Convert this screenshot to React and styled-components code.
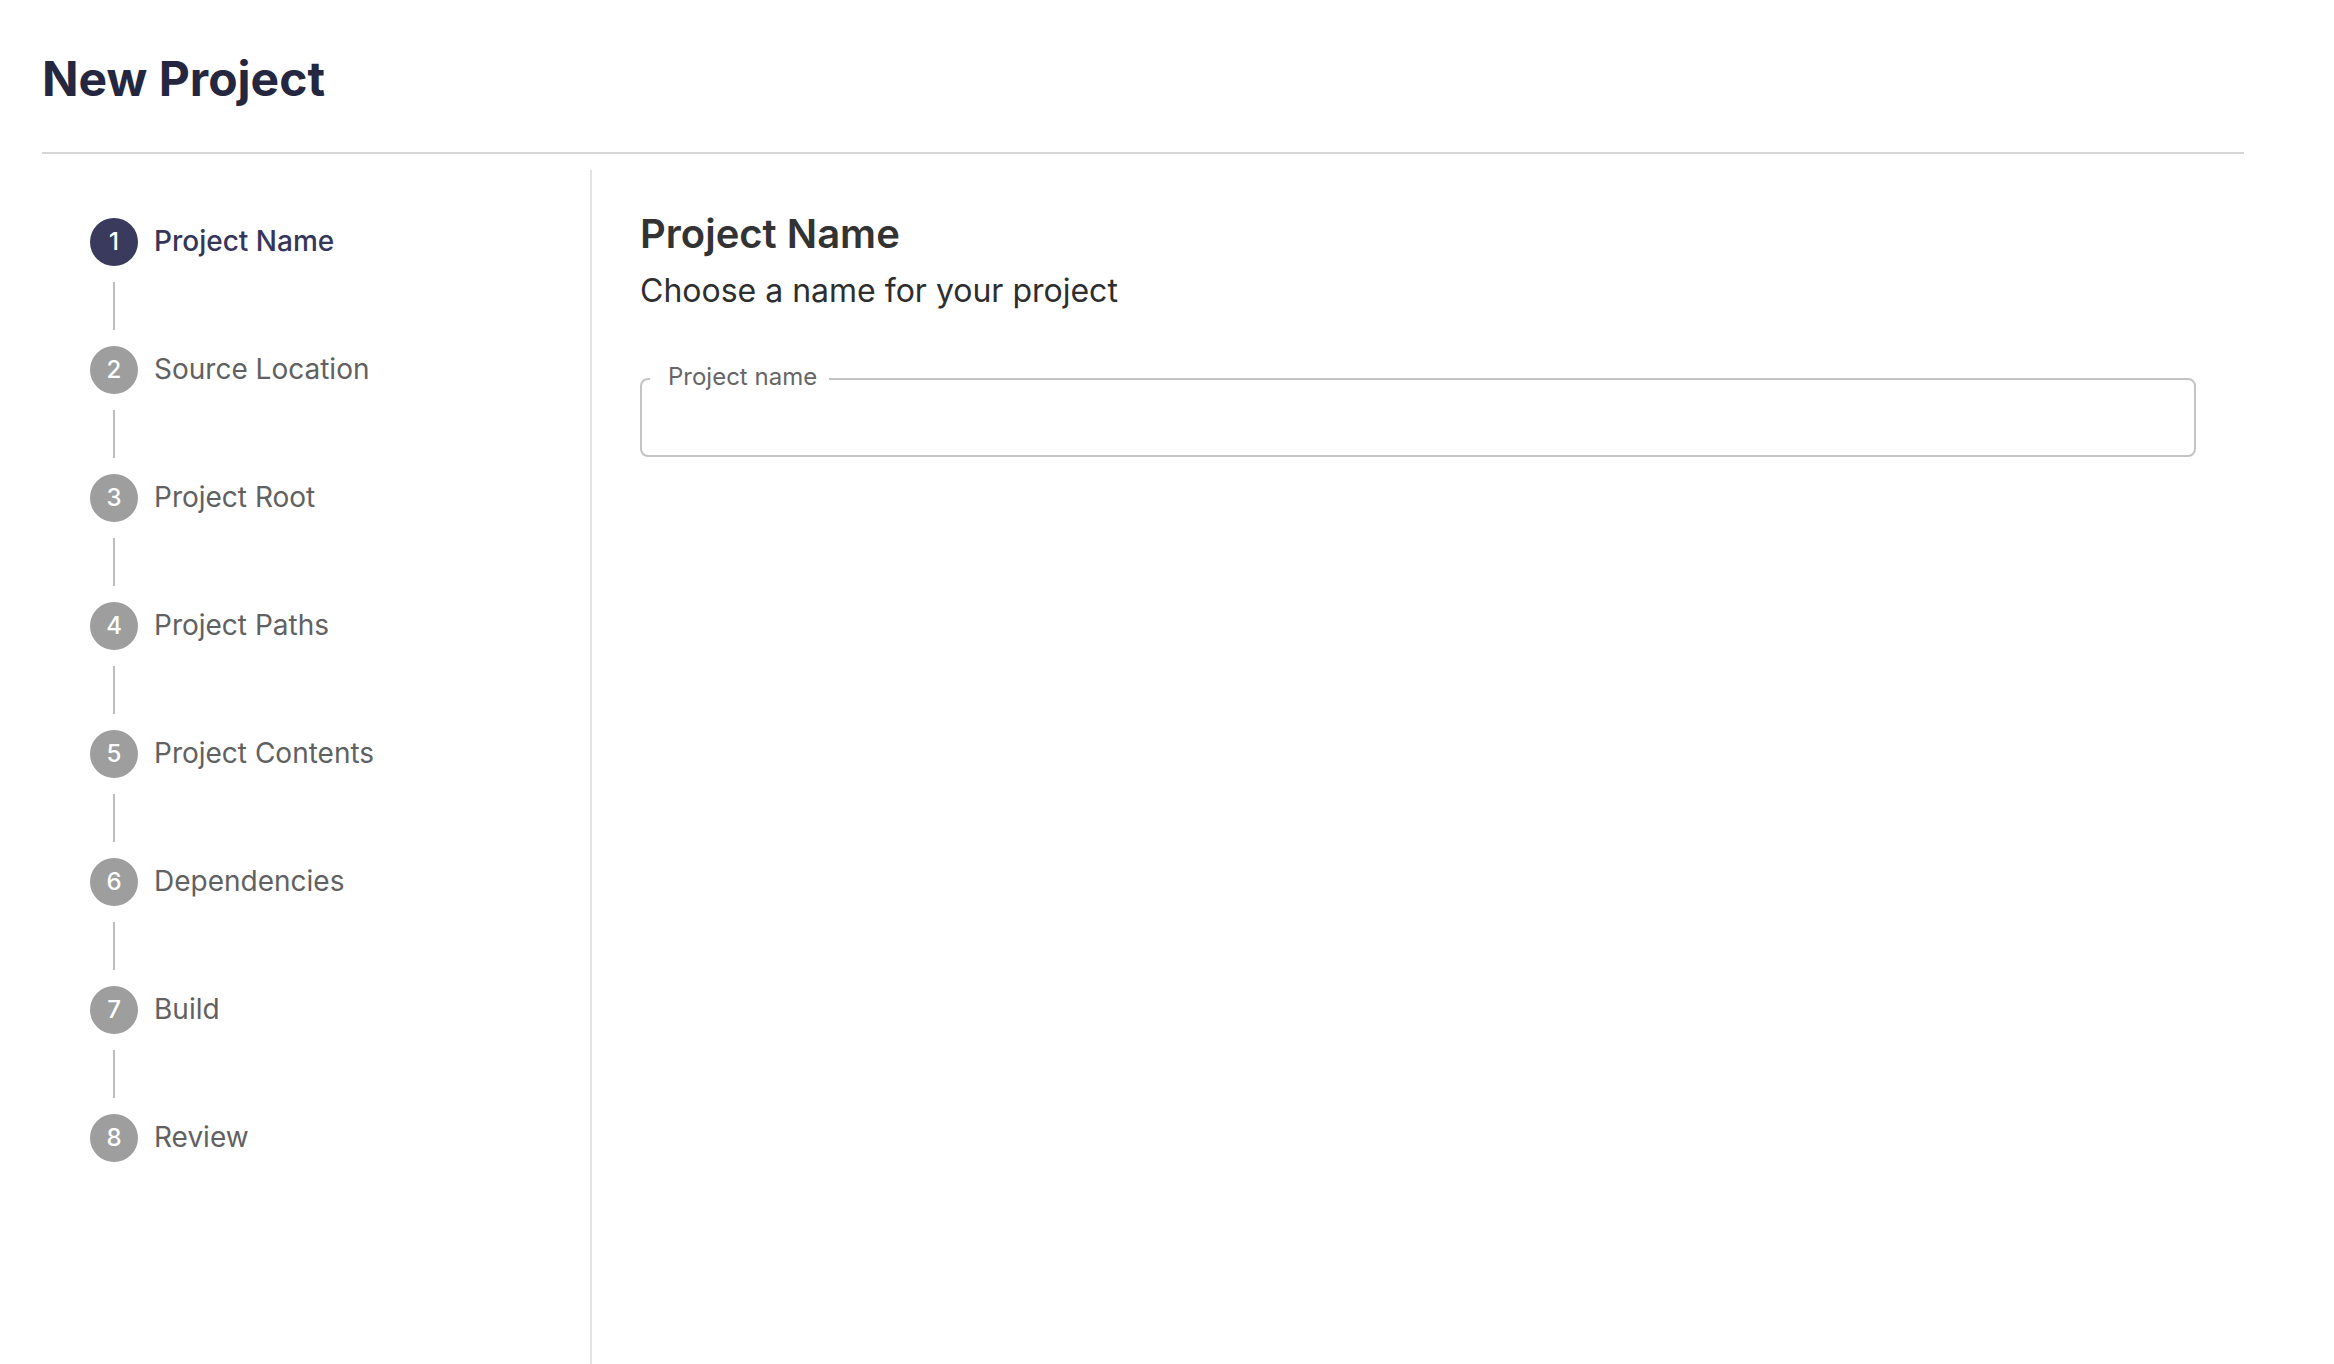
import React from 'react';
import styled, { createGlobalStyle } from 'styled-components';

const GlobalStyle = createGlobalStyle`
  * {
    box-sizing: border-box;
  }
  body {
    margin: 0;
    background: #ffffff;
    font-family: Inter, "Noto Sans", "Liberation Sans", sans-serif;
  }
`;

const STEPS = [
  'Project Name',
  'Source Location',
  'Project Root',
  'Project Paths',
  'Project Contents',
  'Dependencies',
  'Build',
  'Review',
];

const Page = styled.div`
  min-height: 100vh;
  display: flex;
  flex-direction: column;
  padding: 0 90px 0 42px;
`;

const Title = styled.h1`
  margin: 50px 0 44px;
  font-size: 48px;
  line-height: 1.2;
  font-weight: 700;
  color: #24273f;
`;

const Divider = styled.hr`
  margin: 0;
  border: none;
  height: 2px;
  background: #d6d6d6;
`;

const Body = styled.div`
  flex: 1;
  display: flex;
  margin-top: 16px;
`;

const Sidebar = styled.nav`
  width: 550px;
  flex-shrink: 0;
  border-right: 2px solid #e3e3e3;
  padding: 32px 0 0 48px;
`;

const StepRow = styled.div`
  display: flex;
  align-items: center;
  gap: 16px;
  padding: 16px 0;
`;

const StepIcon = styled.span`
  width: 48px;
  height: 48px;
  border-radius: 50%;
  display: flex;
  align-items: center;
  justify-content: center;
  flex-shrink: 0;
  background: ${({ active }) => (active ? '#3a3a5c' : '#9e9e9e')};
  color: #ffffff;
  font-size: 24px;
  font-weight: 500;
  line-height: 1;
`;

const StepLabel = styled.span`
  font-size: 28px;
  line-height: 1.4;
  font-weight: ${({ active }) => (active ? 500 : 400)};
  color: ${({ active }) => (active ? '#36365a' : '#616161')};
`;

const Connector = styled.div`
  margin-left: 23px;
  height: 48px;
  border-left: 2px solid #bdbdbd;
`;

const Main = styled.main`
  flex: 1;
  padding: 40px 48px 0 48px;
`;

const Heading = styled.h2`
  margin: 0;
  font-size: 40px;
  line-height: 1.2;
  font-weight: 600;
  color: #333333;
`;

const Subtitle = styled.p`
  margin: 14px 0 0;
  font-size: 32px;
  line-height: 1.2;
  color: #2e2e2e;
`;

const Field = styled.div`
  position: relative;
  margin-top: 68px;
`;

const FieldLabel = styled.label`
  position: absolute;
  left: 10px;
  top: -13px;
  padding: 0 12px 0 18px;
  background: #ffffff;
  font-size: 24px;
  line-height: 1;
  color: #666666;
`;

const TextInput = styled.input`
  display: block;
  width: 100%;
  height: 79px;
  border: 2px solid #c4c4c4;
  border-radius: 8px;
  padding: 0 28px;
  font-family: inherit;
  font-size: 32px;
  color: #333333;
  background: transparent;
  outline: none;
`;

const Stepper = ({ active }) => (
  <Sidebar>
    {STEPS.map((name, i) => (
      <React.Fragment key={name}>
        {i > 0 && <Connector />}
        <StepRow>
          <StepIcon active={i === active}>{i + 1}</StepIcon>
          <StepLabel active={i === active}>{name}</StepLabel>
        </StepRow>
      </React.Fragment>
    ))}
  </Sidebar>
);

export default function App() {
  return (
    <>
      <GlobalStyle />
      <Page>
        <Title>New Project</Title>
        <Divider />
        <Body>
          <Stepper active={0} />
          <Main>
            <Heading>Project Name</Heading>
            <Subtitle>Choose a name for your project</Subtitle>
            <Field>
              <FieldLabel htmlFor="project-name">Project name</FieldLabel>
              <TextInput id="project-name" type="text" />
            </Field>
          </Main>
        </Body>
      </Page>
    </>
  );
}
